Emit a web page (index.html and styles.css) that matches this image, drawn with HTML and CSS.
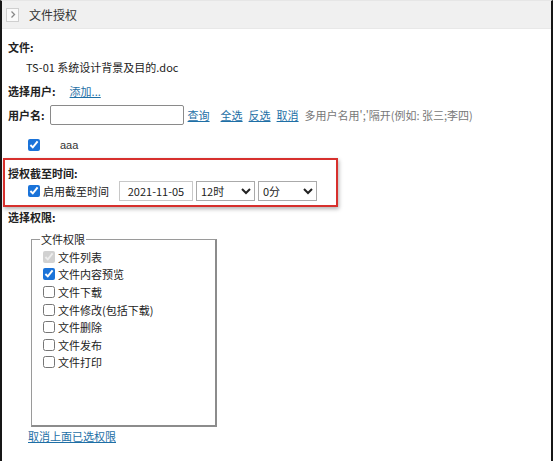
FILE: index.html
```html
<!DOCTYPE html>
<html lang="zh-CN">
<head>
    <meta charset="UTF-8">
    <title>文件授权</title>
    <link rel="stylesheet" href="styles.css">
</head>
<body>
    <div class="frame">
        <div class="header">
            <span class="toggle">
                <svg width="8" height="9" viewBox="0 0 8 9"><path d="M2.5 1.5 L5.5 4.5 L2.5 7.5" fill="none" stroke="#888" stroke-width="1.3"/></svg>
            </span>
            <span class="title">文件授权</span>
        </div>

        <div class="content">
            <div class="label">文件:</div>
            <div class="filename">TS-01 系统设计背景及目的.doc</div>

            <div class="row pick">
                <span class="label">选择用户:</span>
                <a href="#" class="link add">添加...</a>
            </div>

            <div class="row search">
                <span class="label">用户名:</span>
                <input type="text" class="user-input">
                <a href="#" class="link">查询</a>
                <a href="#" class="link gap">全选</a>
                <a href="#" class="link">反选</a>
                <a href="#" class="link">取消</a>
                <span class="hint">多用户名用';'隔开(例如: 张三;李四)</span>
            </div>

            <div class="row user">
                <input type="checkbox" checked>
                <span class="user-name">aaa</span>
            </div>

            <div class="expire">
                <div class="label">授权截至时间:</div>
                <div class="expire-row">
                    <label class="check"><input type="checkbox" checked>启用截至时间</label>
                    <input type="text" class="date" value="2021-11-05">
                    <select class="sel">
                        <option>12时</option>
                    </select>
                    <select class="sel">
                        <option>0分</option>
                    </select>
                </div>
            </div>

            <div class="label perm-label">选择权限:</div>
            <fieldset class="perms">
                <legend>文件权限</legend>
                <label class="check"><input type="checkbox" checked disabled>文件列表</label>
                <label class="check"><input type="checkbox" checked>文件内容预览</label>
                <label class="check"><input type="checkbox">文件下载</label>
                <label class="check"><input type="checkbox">文件修改(包括下载)</label>
                <label class="check"><input type="checkbox">文件删除</label>
                <label class="check"><input type="checkbox">文件发布</label>
                <label class="check"><input type="checkbox">文件打印</label>
            </fieldset>
            <a href="#" class="link clear">取消上面已选权限</a>
        </div>
    </div>
</body>
</html>
```

FILE: styles.css
```css
body {
    margin: 0;
    background: #ffffff;
    font-family: "Noto Sans CJK SC", "Microsoft YaHei", sans-serif;
    font-size: 11px;
    color: #222;
}

.frame {
    height: 461px;
    box-sizing: border-box;
    border-left: 2px solid #161616;
    border-right: 2px solid #161616;
    border-top: 1px solid #e6e6e6;
}

.header {
    display: flex;
    align-items: center;
    height: 27px;
    background: #f0f0f0;
    border-bottom: 1px solid #e8e8e8;
}

.toggle {
    display: flex;
    align-items: center;
    justify-content: center;
    width: 11px;
    height: 12px;
    margin-left: 4px;
    border: 1px solid #cfcfcf;
    background: #fafafa;
}

.title {
    margin-left: 10px;
    font-size: 12px;
    color: #333;
}

.content {
    padding: 8px 0 0 6px;
}

.label {
    font-weight: bold;
    line-height: 20px;
}

.filename {
    line-height: 20px;
    padding-left: 18px;
}

.row {
    display: flex;
    align-items: center;
    height: 24px;
}

.pick {
    margin-top: 2px;
}

.link {
    color: #1e6fa6;
    text-decoration: underline;
}

.add {
    margin-left: 14px;
}

.user-input {
    width: 134px;
    height: 20px;
    box-sizing: border-box;
    margin: 0 4px 0 5px;
    border: 1px solid #8a8a8a;
    border-radius: 2px;
}

.search .link {
    margin-right: 6px;
}

.search .gap {
    margin-left: 5px;
}

.hint {
    margin-left: 0;
    color: #777;
}

.user {
    margin-top: 6px;
    height: 24px;
}

.user input {
    margin: 0 0 0 20px;
    width: 12px;
    height: 12px;
}

.user-name {
    margin-left: 20px;
    font-family: "Liberation Sans", sans-serif;
    color: #333;
}

input[type=checkbox] {
    accent-color: #1a73d9;
}

.expire {
    width: 335px;
    box-sizing: border-box;
    margin: 1px 0 0 -5px;
    padding: 5px 0 4px 3px;
    border: 2px solid #d7302d;
    box-shadow: 1px 2px 4px rgba(0, 0, 0, 0.3);
}

.expire .label {
    line-height: 16px;
}

.expire-row {
    display: flex;
    align-items: center;
    height: 20px;
    padding-left: 20px;
}

.check {
    display: flex;
    align-items: center;
}

.check input {
    width: 12px;
    height: 12px;
    margin: 0 3px 0 0;
}

.date {
    width: 74px;
    height: 20px;
    box-sizing: border-box;
    margin-left: 10px;
    padding: 0 4px;
    border: 1px solid #c8c8c8;
    font-family: inherit;
    font-size: 11px;
    text-align: center;
    color: #222;
}

.sel {
    width: 59px;
    height: 20px;
    margin-left: 3px;
    font-family: inherit;
    font-size: 11px;
    border: 1px solid #aaa;
    border-radius: 0;
    background: #fff;
    color: #222;
}

.perm-label {
    margin-top: 2px;
    line-height: 16px;
}

.perms {
    width: 186px;
    height: 195px;
    box-sizing: border-box;
    margin: 7px 0 0 23px;
    padding: 2px 0 0 11px;
    border: 2px solid #8c8c8c;
    border-width: 1px 2px 2px 1px;
    border-color: #9a9a9a #8c8c8c #8c8c8c #9a9a9a;
}

.perms legend {
    padding: 0 1px;
    margin-left: -3px;
    line-height: 14px;
}

.perms .check {
    height: 17.6px;
}

.clear {
    display: block;
    margin: 1px 0 0 20px;
    line-height: 16px;
}
```
